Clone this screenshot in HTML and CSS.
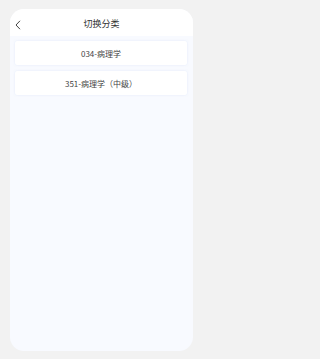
FILE: index.html
```html
<!DOCTYPE html>
<html lang="zh">
<head>
<meta charset="utf-8">
<link rel="stylesheet" href="styles.css">
</head>
<body>
<div class="screen">
  <div class="card">
    <div class="header">
      <svg class="back" width="6" height="10" viewBox="0 0 6 10"><path d="M5 0.8 L1 5 L5 9.2" fill="none" stroke="#444" stroke-width="1"/></svg>
      <div class="title">切换分类</div>
    </div>
    <div class="list">
      <div class="item">034-病理学</div>
      <div class="item">351-病理学（中级）</div>
    </div>
  </div>
</div>
</body>
</html>
```
FILE: styles.css
```css
html, body {
  margin: 0;
  padding: 0;
  background: #f2f2f2;
}
.screen {
  width: 202px;
  height: 359px;
  box-sizing: border-box;
  padding: 9px 9px 8px 10px;
  font-family: "Noto Sans CJK SC", "Noto Sans", sans-serif;
}
.card {
  height: 342px;
  border-radius: 14px;
  background: #f8faff;
  overflow: hidden;
  display: flex;
  flex-direction: column;
}
.header {
  height: 27px;
  background: #ffffff;
  display: flex;
  align-items: center;
  justify-content: center;
  position: relative;
}
.back {
  position: absolute;
  left: 5px;
  top: 11px;
}
.title {
  font-size: 9px;
  color: #333;
  line-height: 1;
  margin-top: 2px;
}
.list {
  padding: 5px 6px 0 5px;
  display: flex;
  flex-direction: column;
  gap: 6px;
}
.item {
  height: 24px;
  background: #ffffff;
  border-radius: 2px;
  box-shadow: 0 0 2px rgba(200, 215, 245, 0.5);
  display: flex;
  align-items: center;
  justify-content: center;
  font-size: 8px;
  color: #444;
}
```
